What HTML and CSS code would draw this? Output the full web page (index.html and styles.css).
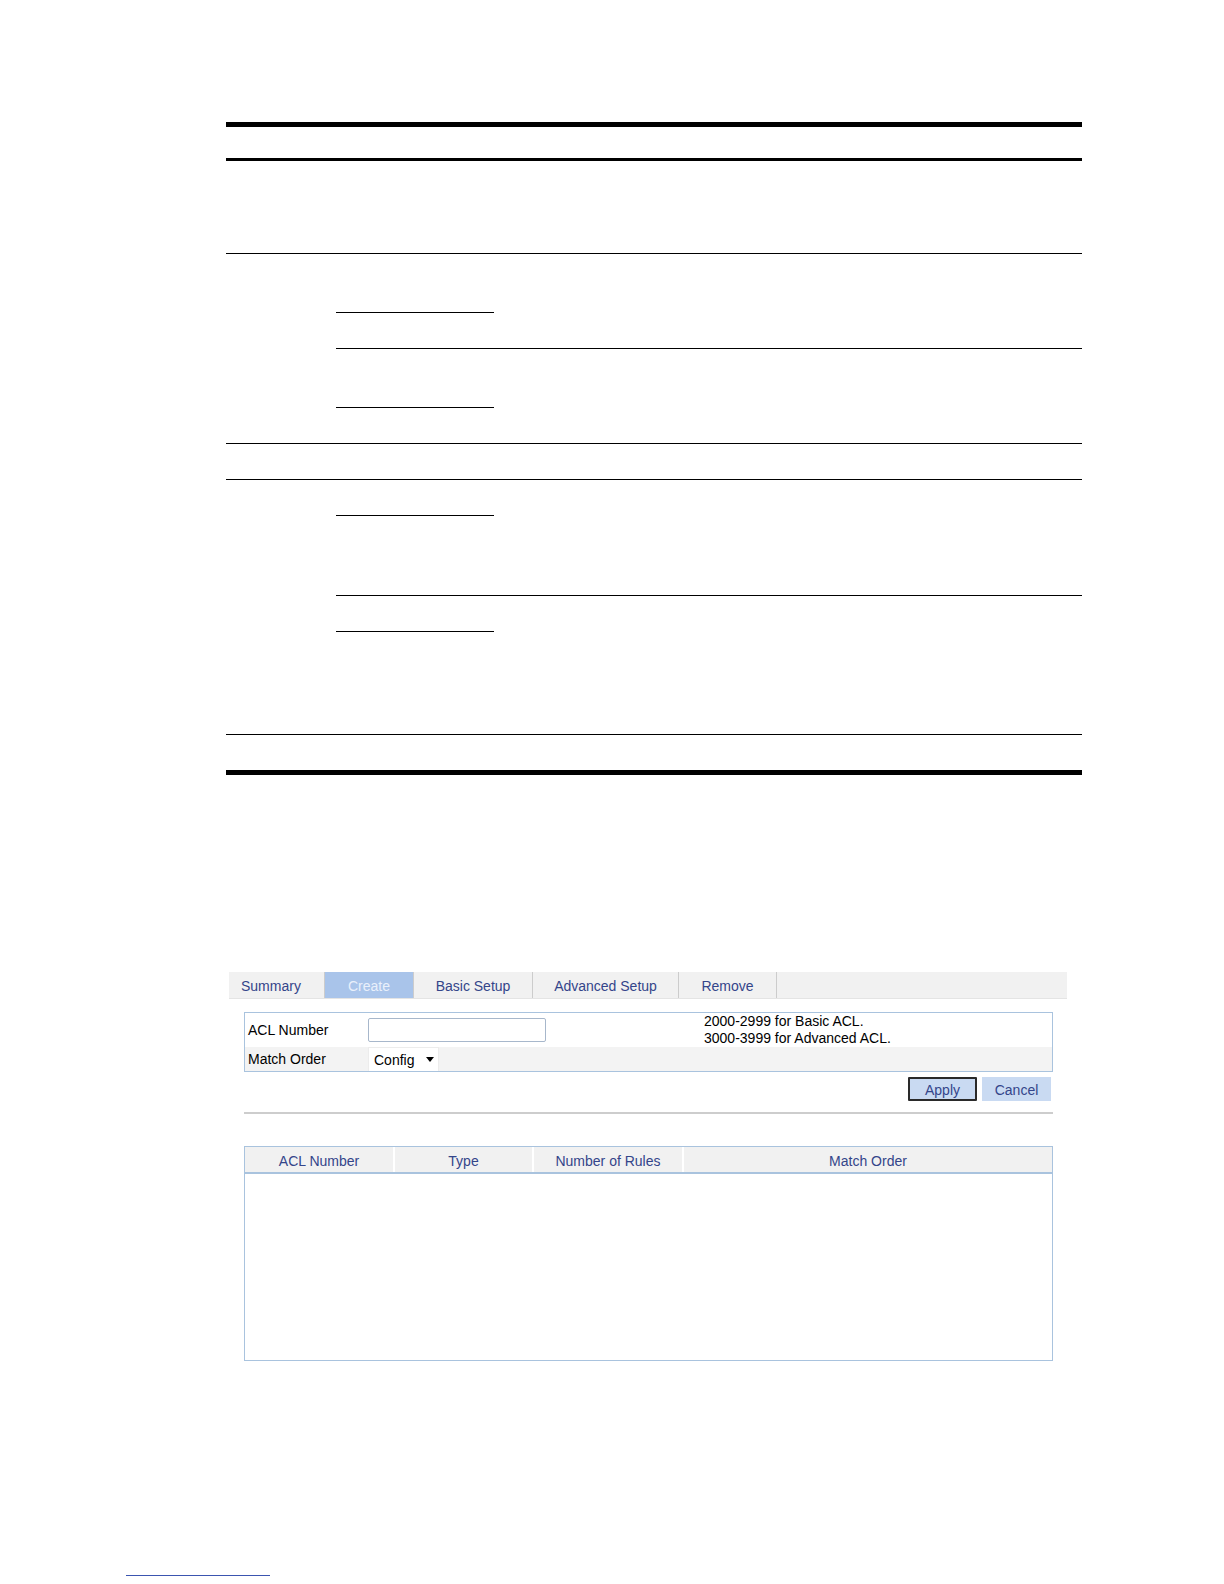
FILE: index.html
```html
<!DOCTYPE html>
<html>
<head>
<meta charset="utf-8">
<link rel="stylesheet" href="styles.css">
</head>
<body>
<div class="page">
  <div class="doc-table">
    <div class="row head"></div>
    <div class="row r1"></div>
    <div class="group">
      <div class="c1"></div>
      <div class="sub">
        <div class="subrow">
          <div class="c2"><div class="cell h58"></div><div class="cell h35 last"></div></div>
          <div class="c3"></div>
        </div>
        <div class="subrow last">
          <div class="c2"><div class="cell h58"></div><div class="cell h35 last"></div></div>
          <div class="c3"></div>
        </div>
      </div>
    </div>
    <div class="row r3"></div>
    <div class="group">
      <div class="c1"></div>
      <div class="sub">
        <div class="subrow">
          <div class="c2"><div class="cell h35"></div><div class="cell h79 last"></div></div>
          <div class="c3"></div>
        </div>
        <div class="subrow last">
          <div class="c2"><div class="cell h35"></div><div class="cell h102 last"></div></div>
          <div class="c3"></div>
        </div>
      </div>
    </div>
    <div class="row r-last"></div>
  </div>

  <div class="ui">
    <div class="tabs">
      <div class="tab first w96">Summary</div>
      <div class="tab w89 active">Create</div>
      <div class="tab w119">Basic Setup</div>
      <div class="tab w146">Advanced Setup</div>
      <div class="tab w98">Remove</div>
      <div class="tab-rest"></div>
    </div>

    <div class="inner">
      <div class="form">
        <div class="frow white">
          <div class="label">ACL Number</div>
          <div class="field"><div class="input"></div></div>
          <div class="hint">2000-2999 for Basic ACL.<br>3000-3999 for Advanced ACL.</div>
        </div>
        <div class="frow grey">
          <div class="label">Match Order</div>
          <div class="field"><div class="select"><span>Config</span><span class="arrow"></span></div></div>
          <div class="hint"></div>
        </div>
      </div>
      <div class="buttons">
        <div class="btn focused">Apply</div>
        <div class="btn">Cancel</div>
      </div>
      <div class="sep"></div>

      <div class="list">
        <div class="lhead">
          <div class="lh w150">ACL Number</div>
          <div class="lh w139">Type</div>
          <div class="lh w150">Number of Rules</div>
          <div class="lh grow">Match Order</div>
        </div>
        <div class="lbody"></div>
      </div>
    </div>
  </div>

  <div class="footnote"></div>
</div>
</body>
</html>
```

FILE: styles.css
```css
html, body {
  margin: 0;
  padding: 0;
  background: #ffffff;
}
.page {
  width: 1224px;
  height: 1584px;
  position: relative;
  font-family: "Liberation Sans", Arial, sans-serif;
  overflow: hidden;
}

/* document table */
.doc-table {
  margin-left: 226px;
  margin-top: 122px;
  width: 856px;
  border-top: 5px solid #000;
  border-bottom: 5px solid #000;
}
.row {
  border-bottom: 1px solid #000;
}
.row.head {
  height: 31px;
  border-bottom: 3px solid #000;
}
.row.r1 { height: 92px; }
.row.r3 { height: 35px; }
.row.r-last { height: 35px; border-bottom: none; }
.group {
  display: flex;
  border-bottom: 1px solid #000;
}
.c1 { width: 110px; }
.sub {
  flex: 1;
  display: flex;
  flex-direction: column;
}
.subrow {
  display: flex;
  border-bottom: 1px solid #000;
}
.subrow.last { border-bottom: none; }
.c2 {
  width: 158px;
  display: flex;
  flex-direction: column;
}
.c3 { flex: 1; }
.cell { border-bottom: 1px solid #000; }
.cell.last { border-bottom: none; }
.h35 { height: 35px; }
.h58 { height: 58px; }
.h79 { height: 79px; }
.h102 { height: 102px; }

/* UI screenshot */
.ui {
  margin-top: 197px;
  margin-left: 229px;
  width: 838px;
  font-size: 14px;
}
.tabs {
  display: flex;
  height: 26px;
  background: #f1f1f1;
  border-bottom: 1px solid #e4e4e4;
}
.tab {
  display: flex;
  align-items: center;
  justify-content: center;
  padding-top: 2px;
  color: #34458a;
  border-right: 1px solid #cccccc;
  box-sizing: border-box;
}
.tab.first {
  justify-content: flex-start;
  padding-left: 12px;
}
.tab.active {
  background: #a9c4ea;
  color: #e9f0fb;
}
.tab-rest { flex: 1; }
.w96 { width: 96px; }
.w89 { width: 89px; }
.w119 { width: 119px; }
.w146 { width: 146px; }
.w98 { width: 98px; }

.inner {
  margin-left: 15px;
  width: 809px;
  padding-top: 13px;
}
.form {
  border: 1px solid #a9c3de;
}
.frow {
  display: flex;
  align-items: center;
}
.frow.white { background: #ffffff; height: 34px; }
.frow.grey { background: #f3f3f3; height: 24px; }
.label {
  width: 120px;
  padding-left: 3px;
  color: #000;
}
.field { width: 336px; }
.hint {
  flex: 1;
  line-height: 17px;
  color: #000;
}
.input {
  width: 176px;
  height: 22px;
  border: 1px solid #a7b7cb;
  border-radius: 2px;
  background: #fff;
}
.select {
  width: 71px;
  height: 24px;
  background: #fff;
  border: 1px solid #ececec;
  border-bottom: none;
  box-sizing: border-box;
  display: flex;
  align-items: center;
  padding-left: 5px;
  gap: 12px;
  color: #000;
}
.arrow {
  width: 0;
  height: 0;
  border-left: 4px solid transparent;
  border-right: 4px solid transparent;
  border-top: 5px solid #000;
}

.buttons {
  display: flex;
  justify-content: flex-end;
  gap: 5px;
  margin-top: 5px;
  padding-right: 2px;
}
.btn {
  width: 69px;
  height: 24px;
  box-sizing: border-box;
  background: #c9daf2;
  color: #34458a;
  display: flex;
  align-items: center;
  justify-content: center;
  padding-top: 2px;
}
.btn.focused {
  border: 2px solid #2a2a2a;
  border-radius: 1px;
}
.sep {
  margin-top: 11px;
  height: 2px;
  background: #cdcdcd;
}

.list {
  margin-top: 32px;
  border: 1px solid #a9c3de;
  height: 213px;
  display: flex;
  flex-direction: column;
}
.lhead {
  display: flex;
  height: 25px;
  background: #f1f1f1;
  border-bottom: 2px solid #a9c3de;
}
.lh {
  display: flex;
  align-items: center;
  justify-content: center;
  padding-top: 2px;
  color: #34458a;
  border-right: 2px solid #ffffff;
  box-sizing: border-box;
}
.lh.grow { flex: 1; border-right: none; }
.w150 { width: 150px; }
.w139 { width: 139px; }
.lbody { flex: 1; background: #fff; }

.footnote {
  position: absolute;
  left: 126px;
  top: 1575px;
  width: 144px;
  height: 1px;
  background: #3b55b0;
}
```
